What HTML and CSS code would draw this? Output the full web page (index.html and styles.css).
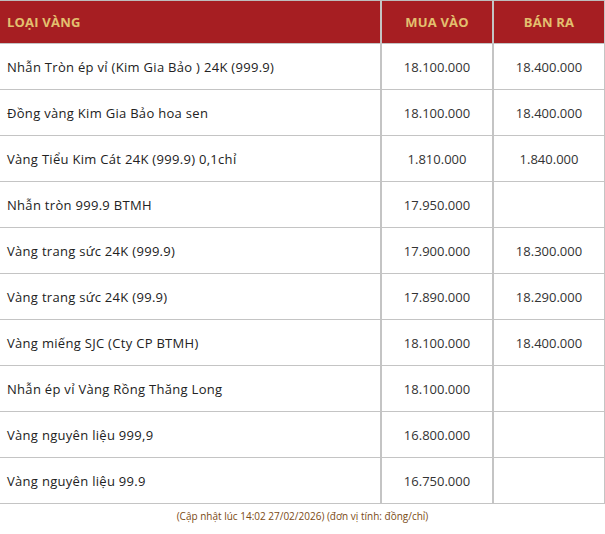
FILE: index.html
```html
<!DOCTYPE html>
<html lang="vi">
<head>
<meta charset="utf-8">
<link rel="stylesheet" href="styles.css">
</head>
<body>
<div class="wrap">
<table class="gold">
<thead>
<tr><th class="name">LOẠI VÀNG</th><th class="buy">MUA VÀO</th><th>BÁN RA</th></tr>
</thead>
<tbody>
<tr><td class="name">Nhẫn Tròn ép vỉ (Kim Gia Bảo ) 24K (999.9)</td><td>18.100.000</td><td>18.400.000</td></tr>
<tr><td class="name">Đồng vàng Kim Gia Bảo hoa sen</td><td>18.100.000</td><td>18.400.000</td></tr>
<tr><td class="name">Vàng Tiểu Kim Cát 24K (999.9) 0,1chỉ</td><td>1.810.000</td><td>1.840.000</td></tr>
<tr><td class="name">Nhẫn tròn 999.9 BTMH</td><td>17.950.000</td><td></td></tr>
<tr><td class="name">Vàng trang sức 24K (999.9)</td><td>17.900.000</td><td>18.300.000</td></tr>
<tr><td class="name">Vàng trang sức 24K (99.9)</td><td>17.890.000</td><td>18.290.000</td></tr>
<tr><td class="name">Vàng miếng SJC (Cty CP BTMH)</td><td>18.100.000</td><td>18.400.000</td></tr>
<tr><td class="name">Nhẫn ép vỉ Vàng Rồng Thăng Long</td><td>18.100.000</td><td></td></tr>
<tr><td class="name">Vàng nguyên liệu 999,9</td><td>16.800.000</td><td></td></tr>
<tr><td class="name">Vàng nguyên liệu 99.9</td><td>16.750.000</td><td></td></tr>
</tbody>
</table>
<p class="note">(Cập nhật lúc 14:02 27/02/2026) (đơn vị tính: đồng/chỉ)</p>
</div>
</body>
</html>
```
FILE: styles.css
```css
html, body { margin: 0; padding: 0; background: #fff; }
body { font-family: "Open Sans", "Noto Sans", sans-serif; color: #222; }
.wrap { width: 605px; }
.gold {
  width: 605px;
  border-collapse: collapse;
  table-layout: fixed;
  border-top: 1px solid #bdbdbd;
}
.gold th {
  background: #a61e22;
  color: #e3c06f;
  font-weight: 700;
  font-size: 13px;
  letter-spacing: 0.2px;
  height: 42px;
  padding: 0;
  text-align: center;
  border-left: 2px solid #c4c4c4;
  border-bottom: 1px solid #c4c4c4;
}
.gold th.name { text-align: left; padding-left: 7px; border-left: 0; width: 373px; }
.gold th.buy { width: 110px; }
.gold th:nth-child(3) { border-right: 1px solid #c4c4c4; }
.gold td {
  height: 45px;
  padding: 0;
  font-size: 13px;
  font-weight: 500;
  color: #333;
  text-align: center;
  border-left: 2px solid #c4c4c4;
  border-bottom: 1px solid #c4c4c4;
}
.gold td.name { text-align: left; padding-left: 7px; border-left: 0; color: #222; letter-spacing: 0.3px; }
.gold td:nth-child(3) { border-right: 1px solid #c4c4c4; }
.note {
  margin: 5px 0 0;
  text-align: center;
  font-size: 10px;
  color: #7a4a14;
}
```
